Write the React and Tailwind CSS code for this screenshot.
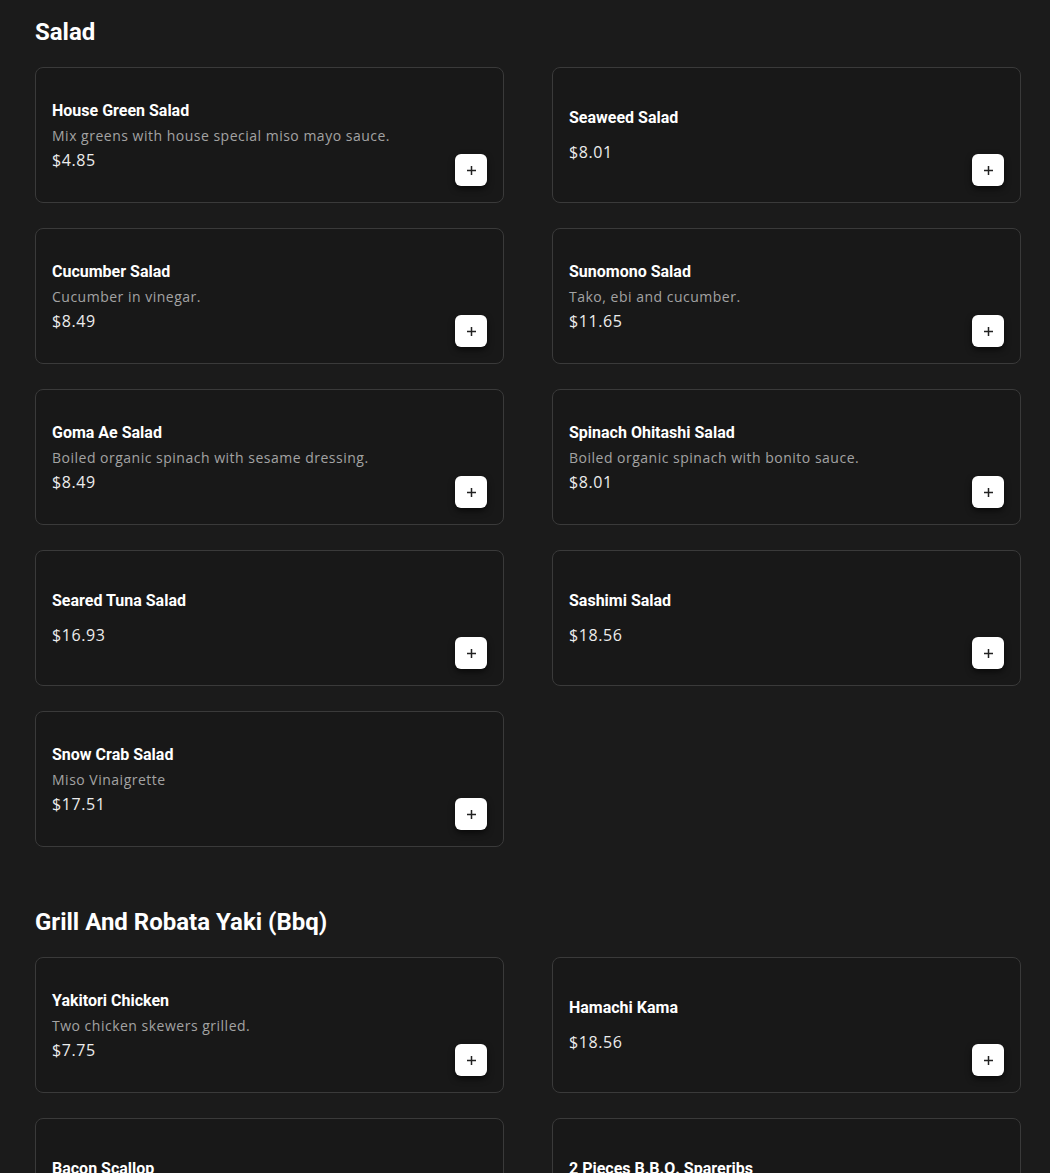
import React from "react";

const sections = [
  {
    title: "Salad",
    items: [
      { name: "House Green Salad", desc: "Mix greens with house special miso mayo sauce.", price: "$4.85" },
      { name: "Seaweed Salad", price: "$8.01" },
      { name: "Cucumber Salad", desc: "Cucumber in vinegar.", price: "$8.49" },
      { name: "Sunomono Salad", desc: "Tako, ebi and cucumber.", price: "$11.65" },
      { name: "Goma Ae Salad", desc: "Boiled organic spinach with sesame dressing.", price: "$8.49" },
      { name: "Spinach Ohitashi Salad", desc: "Boiled organic spinach with bonito sauce.", price: "$8.01" },
      { name: "Seared Tuna Salad", price: "$16.93" },
      { name: "Sashimi Salad", price: "$18.56" },
      { name: "Snow Crab Salad", desc: "Miso Vinaigrette", price: "$17.51" },
    ],
  },
  {
    title: "Grill And Robata Yaki (Bbq)",
    items: [
      { name: "Yakitori Chicken", desc: "Two chicken skewers grilled.", price: "$7.75" },
      { name: "Hamachi Kama", price: "$18.56" },
      { name: "Bacon Scallop", price: "$9.50" },
      { name: "2 Pieces B.B.Q. Spareribs", price: "$9.95" },
    ],
  },
];

function PlusIcon() {
  return (
    <svg width="11" height="11" viewBox="0 0 11 11" fill="none">
      <path d="M5.5 1v9M1 5.5h9" stroke="#222" strokeWidth="1.5" />
    </svg>
  );
}

function MenuCard({ item }) {
  return (
    <div className="relative h-[136px] rounded-lg border border-[#3a3a3a] bg-[#181818] px-4 flex flex-col justify-center">
      <div className="font-['Roboto'] font-bold text-[16px] leading-6 text-white">{item.name}</div>
      {item.desc ? (
        <div className="mt-[3px] font-['Open_Sans'] text-[14px] leading-5 tracking-[0.5px] text-[#a3a3a3]">{item.desc}</div>
      ) : null}
      <div className={`${item.desc ? "mt-[2px]" : "mt-[10px]"} font-['Open_Sans'] text-[16px] leading-6 tracking-[0.6px] text-[#ececec]`}>{item.price}</div>
      <button className="absolute right-4 bottom-4 w-8 h-8 rounded-md bg-white flex items-center justify-center shadow-[0_3px_6px_rgba(0,0,0,0.6)]">
        <PlusIcon />
      </button>
    </div>
  );
}

export default function App() {
  return (
    <div className="min-h-screen bg-[#1b1b1b] pl-[35px] pr-[29px] pt-4 pb-10">
      {sections.map((s, i) => (
        <section key={s.title} className={i > 0 ? "mt-[59px]" : ""}>
          <h2 className="font-['Roboto'] font-bold text-2xl leading-8 text-white mb-[19px]">{s.title}</h2>
          <div className="grid grid-cols-2 gap-x-12 gap-y-[25px]">
            {s.items.map((it) => (
              <MenuCard key={it.name} item={it} />
            ))}
          </div>
        </section>
      ))}
    </div>
  );
}
